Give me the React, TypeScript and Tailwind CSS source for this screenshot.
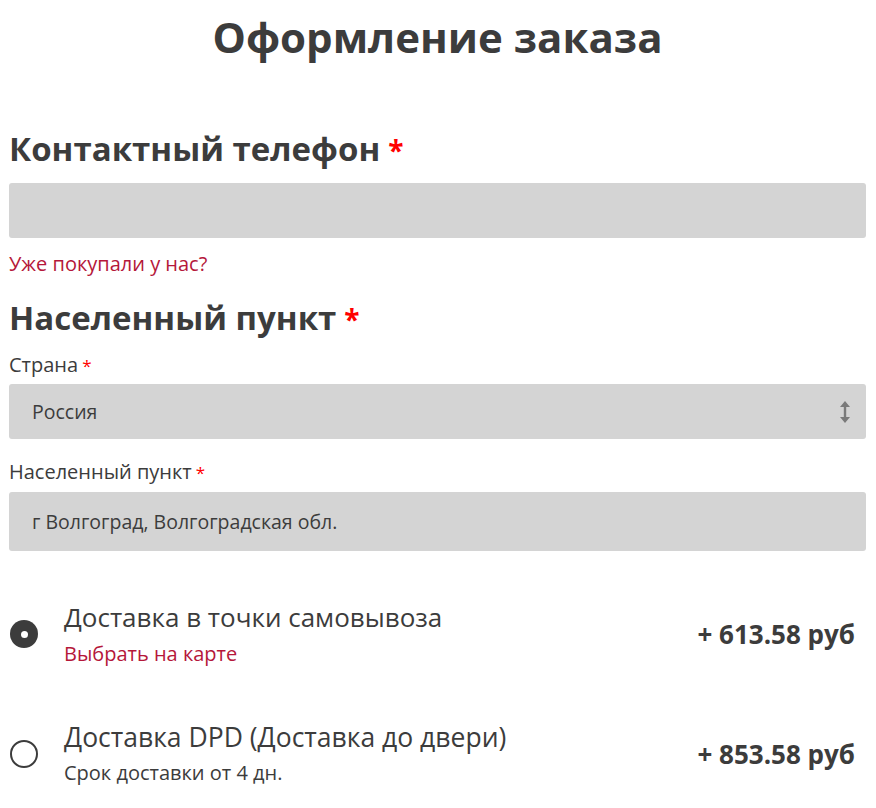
export default function App() {
  return (
    <div className="min-h-screen bg-white font-['Open_Sans',sans-serif] text-[#3c3c3c]">
      <div className="pl-[9px] pr-[10px]">
        <h1 className="pt-[11px] text-center text-[42px] font-bold leading-[52px]">Оформление заказа</h1>

        {/* Phone */}
        <h2 className="mt-[66px] text-[33px] font-bold leading-[40px]">
          Контактный телефон<span className="ml-[8px] text-[28px] leading-none text-[#f00]">*</span>
        </h2>
        <input className="mt-[14px] block h-[55px] w-full rounded-[3px] bg-[#d4d4d4] px-[23px] outline-none" />
        <a href="#" className="mt-[13px] block text-[20px] leading-[26px] text-[#b5173a]">
          Уже покупали у нас?
        </a>

        {/* Locality */}
        <h2 className="mt-[21px] text-[33px] font-bold leading-[40px]">
          Населенный пункт<span className="ml-[8px] text-[28px] leading-none text-[#f00]">*</span>
        </h2>
        <label className="mt-[14px] block text-[20px] leading-[26px]">
          Страна<span className="ml-[4px] text-[17px] leading-none text-[#f00]">*</span>
        </label>
        <div className="mt-[6px] flex h-[55px] items-center justify-between rounded-[3px] bg-[#d4d4d4] pl-[23px] pr-[16px]">
          <span className="text-[19.5px]">Россия</span>
          <svg width="10" height="22" viewBox="0 0 10 22" fill="#7a7a7a">
            <path d="M5 0L10 6H6.2V16H10L5 22L0 16H3.8V6H0Z" />
          </svg>
        </div>
        <label className="mt-[20px] block text-[20px] leading-[26px]">
          Населенный пункт<span className="ml-[4px] text-[17px] leading-none text-[#f00]">*</span>
        </label>
        <div className="mt-[7px] flex h-[59px] items-center rounded-[3px] bg-[#d4d4d4] pl-[23px]">
          <span className="text-[19.5px]">г Волгоград, Волгоградская обл.</span>
        </div>

        {/* Delivery options */}
        <div className="mt-[50px] flex items-center pr-[11px]">
          <div className="ml-[1px] flex h-[28px] w-[28px] shrink-0 items-center justify-center rounded-full bg-[#3c3c3c]">
            <div className="h-[7px] w-[7px] rounded-full bg-white" />
          </div>
          <div className="ml-[26px]">
            <div className="text-[26px] leading-[32px]">Доставка в точки самовывоза</div>
            <a href="#" className="mt-[8px] block text-[20px] leading-[26px] text-[#b5173a]">Выбрать на карте</a>
          </div>
          <div className="ml-auto text-[26px] font-bold leading-[32px]">+ 613.58 руб</div>
        </div>

        <div className="mt-[54px] flex items-center pr-[11px]">
          <div className="ml-[1px] h-[28px] w-[28px] shrink-0 rounded-full border-[2.5px] border-[#3c3c3c]" />
          <div className="ml-[26px]">
            <div className="text-[26.5px] leading-[32px]">Доставка DPD (Доставка до двери)</div>
            <div className="mt-[7px] text-[20px] leading-[26px]">Срок доставки от 4 дн.</div>
          </div>
          <div className="ml-auto text-[26px] font-bold leading-[32px]">+ 853.58 руб</div>
        </div>
      </div>
    </div>
  );
}
